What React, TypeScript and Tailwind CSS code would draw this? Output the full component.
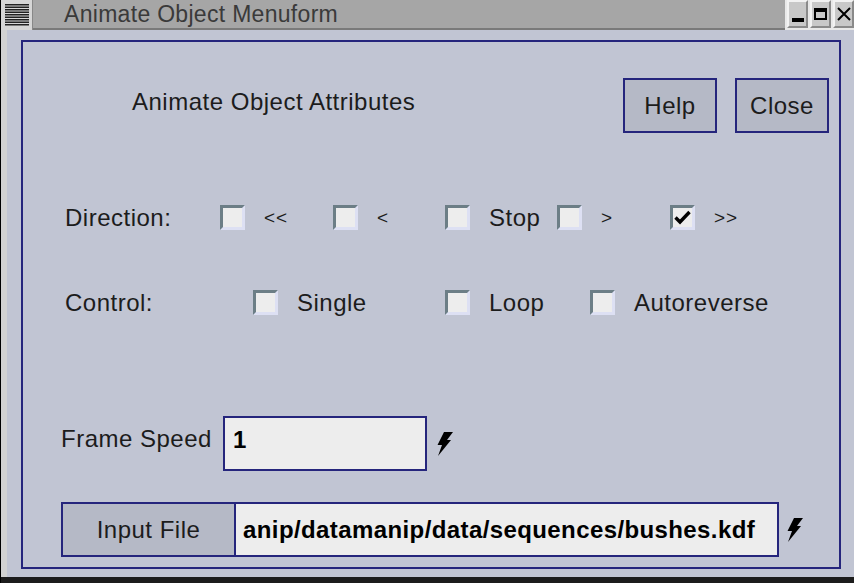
import React from 'react';

const navy = 'border-[#25257c]';

const Bolt: React.FC = () => (
  <svg width="17" height="24" viewBox="0 0 17 24" className="shrink-0">
    <path d="M8 0 L17 0 L11 8 L15 8 L2 24 L6 13 L1.5 13 Z" fill="#000" />
  </svg>
);

const Check: React.FC<{ label: string; checked?: boolean; small?: boolean }> = ({ label, checked, small }) => (
  <div className="flex items-center">
    <div className="w-[25px] h-[25px] border-[3px] border-t-[#6c7e86] border-l-[#6c7e86] border-b-[#dde0f3] border-r-[#dde0f3] bg-[#ededed] flex items-center justify-center">
      {checked && (
        <svg width="17" height="15" viewBox="0 0 17 15">
          <path d="M1.5 7.5 L6 12 L15.5 2" stroke="#000" strokeWidth="3.4" fill="none" />
        </svg>
      )}
    </div>
    <span className={`ml-[19px] text-[#1c1c1c] ${small ? 'text-[19px] tracking-[1px]' : ''}`}>{label}</span>
  </div>
);

const TitleButton: React.FC<{ children: React.ReactNode }> = ({ children }) => (
  <div className="w-[21px] h-[28px] border-2 border-t-[#f2f2f2] border-l-[#f2f2f2] border-b-[#8a8a8a] border-r-[#8a8a8a] bg-[#c8c8c8] flex items-center justify-center">
    {children}
  </div>
);

export default function App() {
  return (
    <div className="w-[854px] h-[583px] bg-white overflow-hidden font-['Liberation_Sans',Arial,sans-serif] text-[24px] tracking-[0.5px] leading-none">
      <div className="h-full flex flex-col border-l border-black bg-[#1c1c1c]">
        {/* title bar */}
        <div className="h-[30px] flex bg-[#d0d0d0] shrink-0">
          <div className="w-[32px] h-full bg-[#d6d6d6] border-r border-[#888] flex items-center justify-center">
            <svg width="24" height="24" viewBox="0 0 24 24">
              {[1, 3.5, 6, 8.5, 11, 13.5, 16, 18.5, 21].map((y) => (
                <rect key={y} x="0" y={y} width="24" height="1.5" fill="#222" />
              ))}
            </svg>
          </div>
          <div className="flex-1 bg-[#a6a6a6] border-b-2 border-[#7a7a7a] flex items-center pl-[31px] text-[23px] tracking-[0.3px] text-[#3a3a3a]">
            Animate Object Menuform
          </div>
          <div className="flex items-start gap-[2px] pl-[2px] bg-[#e8e8e8]">
            <TitleButton>
              <div className="w-[12px] h-[4px] bg-black mt-[12px]" />
            </TitleButton>
            <TitleButton>
              <div className="w-[13px] h-[12px] border-2 border-t-[4px] border-black" />
            </TitleButton>
            <TitleButton>
              <svg width="14" height="14" viewBox="0 0 14 14">
                <path d="M1 1 L13 13 M13 1 L1 13" stroke="#000" strokeWidth="2" />
              </svg>
            </TitleButton>
          </div>
        </div>

        {/* window body */}
        <div className="flex-1 mb-[6px] bg-[#c1c5d3] border-l-[6px] border-[#d2d2d2] pl-[14px] pr-[13px] pt-[10px] pb-[8px]">
          <div className={`h-full border-2 ${navy} flex flex-col`}>
            <div className="flex items-center mt-[36px] h-[55px]">
              <div className="ml-[109px] -mt-[8px] text-[#1c1c1c]">Animate Object Attributes</div>
              <div className="ml-auto mr-[10px] flex gap-[18px]">
                <button className={`w-[94px] h-[55px] border-2 ${navy} bg-[#b5b9c6] text-[#1c1c1c]`}>Help</button>
                <button className={`w-[94px] h-[55px] border-2 ${navy} bg-[#b5b9c6] text-[#1c1c1c]`}>Close</button>
              </div>
            </div>

            <div className="flex items-center mt-[72px] h-[25px]">
              <div className="ml-[42px] w-[155px] text-[#1c1c1c]">Direction:</div>
              <div className="w-[113px]"><Check label="<<" small /></div>
              <div className="w-[112px]"><Check label="<" small /></div>
              <div className="w-[112px]"><Check label="Stop" /></div>
              <div className="w-[113px]"><Check label=">" small /></div>
              <div className="w-[113px]"><Check label=">>" checked small /></div>
            </div>

            <div className="flex items-center mt-[60px] h-[25px]">
              <div className="ml-[42px] w-[188px] text-[#1c1c1c]">Control:</div>
              <div className="w-[192px]"><Check label="Single" /></div>
              <div className="w-[145px]"><Check label="Loop" /></div>
              <div><Check label="Autoreverse" /></div>
            </div>

            <div className="flex items-center mt-[101px] h-[55px]">
              <div className="ml-[38px] w-[162px] -mt-[10px] text-[#1c1c1c] whitespace-nowrap">Frame Speed</div>
              <div className={`w-[204px] h-[55px] border-2 ${navy} bg-[#ededed] flex items-center pl-[8px] pb-[8px] font-bold text-black`}>1</div>
              <div className="ml-[9px]"><Bolt /></div>
            </div>

            <div className="flex items-center mt-[31px] h-[55px]">
              <div className={`ml-[38px] flex h-[55px] border-2 ${navy}`}>
                <div className="w-[173px] h-full bg-[#b5b9c6] flex items-center justify-center text-[#1c1c1c] border-r-2 border-[#25257c]">Input File</div>
                <div className="w-[541px] h-full bg-[#ededed] flex items-center pl-[7px] font-bold tracking-[0.4px] text-black whitespace-nowrap overflow-hidden">anip/datamanip/data/sequences/bushes.kdf</div>
              </div>
              <div className="ml-[7px]"><Bolt /></div>
            </div>
          </div>
        </div>
      </div>
    </div>
  );
}
